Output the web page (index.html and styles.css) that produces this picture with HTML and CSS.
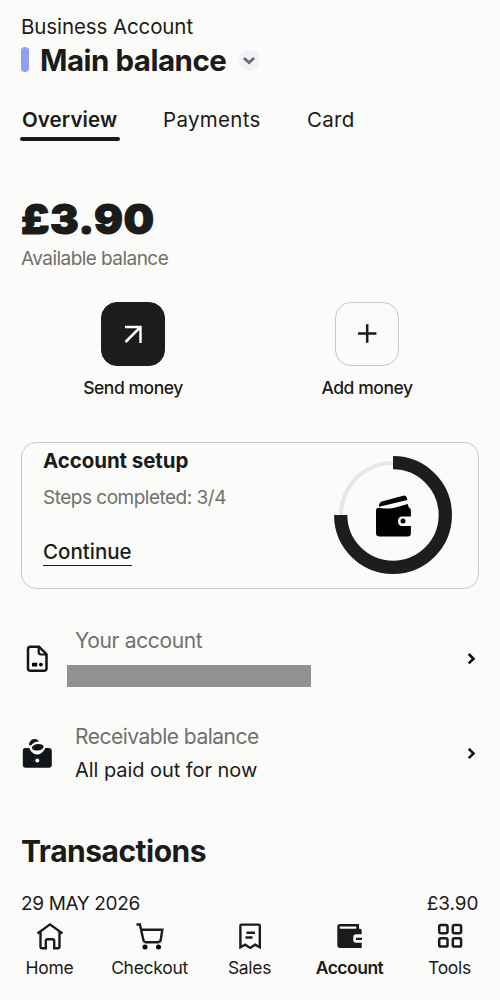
FILE: index.html
```html
<!DOCTYPE html>
<html lang="en">
<head>
<meta charset="utf-8">
<title>Business Account</title>
<link rel="stylesheet" href="styles.css">
</head>
<body>
<div class="screen">
  <header class="header">
    <div class="kind"><span>Business Account</span></div>
    <div class="account">
      <i class="marker"></i>
      <h1 class="name"><span>Main balance</span></h1>
      <svg class="picker" viewBox="0 0 20 20"><rect width="20" height="20" rx="8" fill="#f0f2f5"/><path d="M4.900 7.900 10 12.600l5.100-4.700" fill="none" stroke="#686c72" stroke-width="2.700"/></svg>
    </div>
  </header>
  <nav class="tabs">
    <a class="tab active"><span>Overview</span></a>
    <a class="tab payments"><span>Payments</span></a>
    <a class="tab card-tab"><span>Card</span></a>
  </nav>
  <section class="balance">
    <div class="amount"><span>£3.90</span></div>
    <div class="caption"><span>Available balance</span></div>
  </section>
  <section class="actions">
    <div class="action">
      <div class="tile dark"><svg viewBox="0 0 64 64"><path d="M24 25h15.500v16M39.500 25 24.500 40" fill="none" stroke="#fff" stroke-width="2.500"/></svg></div>
      <span class="action-label send">Send money</span>
    </div>
    <div class="action">
      <div class="tile"><svg viewBox="0 0 64 64"><path d="M23 31.500h18.400M32.200 22.300v18.400" fill="none" stroke="#1b1b1a" stroke-width="2.500"/></svg></div>
      <span class="action-label add">Add money</span>
    </div>
  </section>
  <section class="setup">
    <div class="setup-text">
      <h2 class="setup-title">Account setup</h2>
      <div class="steps">Steps completed: 3/4</div>
      <a class="continue">Continue</a>
    </div>
    <svg class="ring" viewBox="0 0 118 118">
      <path d="M7 59A52 52 0 0 1 59 7" fill="none" stroke="#e7e7e5" stroke-width="4"/>
      <path d="M59 6.700A52.300 52.300 0 1 1 6.700 59" fill="none" stroke="#1d1d1c" stroke-width="13.300"/>
      <g transform="translate(1.700 0)"><path d="M46 45.500 67.500 39.700q2.500-.6 3.400 1.600l.8 2.800L43.300 50.800v-1.800q.2-2.500 2.700-3.500Z"/><path d="M42.800 51.700q11 1.800 17-.1l12.200-3.700 1 3.300q2.200 1.100 2.200 3.600v5.700H66.500q-4.200 0-4.200 4.700t4.200 4.700h8.700v7.400q0 3.200-3.200 3.200H44q-3.700 0-3.700-3.500V54.500q0-2.500 2.500-2.800Z"/><circle cx="67.300" cy="65" r="2.500"/></g>
    </svg>
  </section>
  <section class="rows">
    <div class="row">
      <svg class="row-icon" viewBox="0 0 32 32"><path d="M9.500 3.700h8.500l7.500 7.500v14q0 2.500-2.500 2.500H9.500Q7 27.700 7 25.200V6.200Q7 3.700 9.500 3.700Z" fill="none" stroke="#151515" stroke-width="2.500"/><path d="M17.700 3.700v5.300q0 2.500 2.500 2.500h5.300" fill="none" stroke="#151515" stroke-width="2.200"/><rect x="11" y="19.800" width="5.200" height="3.800" rx=".5"/><circle cx="19.900" cy="21.600" r="1.900"/></svg>
      <div class="row-text"><div class="row-title yours">Your account</div><div class="mask"></div></div>
      <svg class="chevron" viewBox="0 0 12 14"><path d="M2.700 2 7.500 6.700 2.700 11.400" fill="none" stroke="#111" stroke-width="2.600"/></svg>
    </div>
    <div class="row">
      <svg class="row-icon" viewBox="0 0 32 32"><g transform="translate(-.2 -2.500)"><path d="M4.500 12.500h4q1.300 4 4.200 5.600 3.700 1.900 7.400 0 3-1.600 4.300-5.600H28q3 0 3 3v14q0 2.800-3 2.800H5Q2 32.300 2 29.500v-14q0-3 2.500-3Z" fill="#11161a"/><ellipse cx="17" cy="11.700" rx="5.900" ry="3.200" transform="rotate(-7 17 11.700)" fill="#11161a"/><path d="M8 9.200Q9 3.500 14 3.500q3.300 0 4 2.600-4.800.1-7.800 4Z" fill="#11161a"/><circle cx="16.500" cy="25" r="2" fill="#fff"/></g></svg>
      <div class="row-text"><div class="row-title receivable">Receivable balance</div><div class="row-value">All paid out for now</div></div>
      <svg class="chevron" viewBox="0 0 12 14"><path d="M2.700 1.700 7.500 6.400 2.700 11.100" fill="none" stroke="#111" stroke-width="2.600"/></svg>
    </div>
  </section>
  <h2 class="transactions">Transactions</h2>
  <div class="day"><span class="date">29 MAY 2026</span><span class="total">£3.90</span></div>
  <nav class="bottom">
    <a class="item"><svg viewBox="0 0 32 32"><path d="M3.500 13.500 16 4.400l12.500 9.100M6.500 12v14.500q0 1.800 1.800 1.800h3.500V21q0-1.800 1.800-1.800h4.800q1.800 0 1.800 1.800v7.300h3.500q1.800 0 1.800-1.800V12" fill="none" stroke="#1b1b1a" stroke-width="2.400"/></svg><span class="home">Home</span></a>
    <a class="item"><svg viewBox="0 0 32 32"><path d="M2.500 4.500h3.400l3.500 15.600q.5 2.200 2.700 2.200h12M6.800 9.800h21.500l-1.500 9.700q-.4 2.800-3.200 2.800" fill="none" stroke="#1b1b1a" stroke-width="2.400"/><circle cx="11" cy="27" r="2.500"/><circle cx="24.500" cy="27" r="2.500"/></svg><span class="checkout">Checkout</span></a>
    <a class="item"><svg viewBox="0 0 32 32"><path d="M7.600 4.600h17q1.200 0 1.200 1.200v21.400l-4.600-2.500-5 3.200-5-3.200-4.800 2.500V5.800q0-1.200 1.200-1.200Z" fill="none" stroke="#1b1b1a" stroke-width="2.400"/><path d="M12.500 12.700h8.500M11.500 17.500h7" stroke="#1b1b1a" stroke-width="2.500"/></svg><span class="sales">Sales</span></a>
    <a class="item"><svg viewBox="0 0 32 32"><path fill-rule="evenodd" d="M5.500 4H25v4.800h1q1.700 0 1.700 1.700v3.800h-5.500q-2.900 0-2.900 2.500v3.500q0 2.500 2.900 2.500h5.500v5.200H6.200Q3.300 28 3.300 25V6.500Q3.300 4 5.500 4ZM5.800 6.500v2.300h16.500V6.500ZM22 17.700h6v2.300h-6Z" fill="#1b1b1a"/></svg><span class="current">Account</span></a>
    <a class="item"><svg viewBox="0 0 32 32"><g fill="none" stroke="#1b1b1a" stroke-width="2.500"><rect x="5.200" y="5" width="8.300" height="8.300" rx="1.700"/><rect x="18.800" y="5" width="8.300" height="8.300" rx="1.700"/><rect x="5.200" y="18.300" width="8.300" height="8.300" rx="1.700"/><rect x="18.800" y="18.300" width="8.300" height="8.300" rx="1.700"/></g></svg><span class="tools">Tools</span></a>
  </nav>
</div>
</body>
</html>
```
FILE: styles.css
```css
* { box-sizing: border-box; }
body { margin: 0; background: #fbfbf9; color: #1b1b1a; font-family: Inter, "Liberation Sans", sans-serif; font-weight: 440; }
h1, h2 { margin: 0; }
svg { display: block; flex: none; }
.screen { width: 500px; height: 1000px; padding: 14px 21px 0; overflow: hidden; display: flex; flex-direction: column; white-space: nowrap; }
.header { height: 64px; }
.kind { font-size: 20.5px; line-height: 25px; letter-spacing: -0.1px; }
.account { display: flex; align-items: center; height: 41px; }
.marker { width: 8px; height: 25px; border-radius: 4px; background: #919ff6; }
.name { margin-left: 11px; font-size: 29.5px; line-height: 40px; letter-spacing: -0.5px; width: 188px; }
.picker { width: 20px; height: 20px; margin-left: 10.5px; }
.tabs { display: flex; margin-top: 22px; height: 41px; }
.tab { font-size: 20.5px; line-height: 40px; height: 41px; padding-left: 2px; letter-spacing: 0.3px; }
.tab.active { width: 100px; margin-left: -1px; font-weight: 600; letter-spacing: 0.1px; }
.tab.active::after { content: ""; display: block; height: 4px; margin: -3px 0 0 -2px; border-radius: 2px; background: #1b1b1a; }
.payments { margin-left: 41px; width: 144px; }
.balance { margin-top: 58px; height: 74px; }
.amount { font-size: 41px; font-weight: 900; line-height: 41px; letter-spacing: 0.4px; transform: scaleX(1.05); transform-origin: left; -webkit-text-stroke: 1px #1b1b1a; }
.caption { margin-top: 9px; font-size: 19px; line-height: 20px; letter-spacing: -0.55px; color: #70706e; }
.actions { display: flex; margin-top: 29px; height: 140px; }
.action { width: 234px; flex: none; display: flex; flex-direction: column; align-items: center; }
.actions .action:first-child { margin-left: -5px; }
.tile { width: 64px; height: 64px; border-radius: 16px; border: 1px solid #c8c8c6; }
.tile.dark { background: #1c1c1a; border-color: #1c1c1a; }
.tile svg { width: 64px; height: 64px; margin: -1px; }
.action-label { margin-top: 12px; font-size: 17.5px; line-height: 20px; letter-spacing: -0.45px; font-weight: 450; }
.setup { width: 458px; height: 147px; border: 1px solid #c8c8c6; border-radius: 15px; padding-left: 21px; display: flex; }
.setup-text { width: 291px; }
.setup-title { font-size: 20.5px; font-weight: 650; line-height: 36px; letter-spacing: -0.08px; }
.steps { font-size: 19px; line-height: 38px; letter-spacing: -0.5px; color: #70706e; }
.continue { display: inline-block; margin-top: 21px; height: 28px; line-height: 27px; font-size: 20.5px; font-weight: 500; border-bottom: 1.5px solid #1b1b1a; }
.ring { width: 118px; height: 118px; margin-top: 13px; }
.rows { margin-top: 37px; }
.row { display: flex; align-items: center; height: 65px; margin-bottom: 30px; }
.row-icon { width: 32px; height: 32px; }
.row-text { width: 412px; height: 65px; padding-left: 22px; }
.row-title { font-size: 21px; line-height: 30px; letter-spacing: -0.35px; color: #70706e; }
.receivable { letter-spacing: -0.5px; line-height: 32px; }
.mask { width: 244px; height: 22px; margin: 9px 0 0 -8px; background: #929290; }
.row-value { font-size: 20px; line-height: 34px; letter-spacing: -0.05px; }
.chevron { width: 12px; height: 14px; margin-left: 1px; }
.transactions { margin-top: 15px; font-size: 30px; line-height: 40px; letter-spacing: -0.5px; font-weight: 650; }
.day { display: flex; justify-content: space-between; height: 24px; margin-top: 21px; font-size: 19px; line-height: 24px; letter-spacing: -0.35px; }
.total { margin-right: 0.7px; letter-spacing: -0.1px; }
.bottom { display: flex; margin: 4px -21px 0 -21.5px; }
.item { width: 100px; display: flex; flex-direction: column; align-items: center; font-size: 17.5px; line-height: 20px; letter-spacing: -0.3px; }
.item svg { width: 32px; height: 32px; }
.item span { margin-top: 6px; }
.item .current { font-weight: 600; letter-spacing: -0.5px; }
```
